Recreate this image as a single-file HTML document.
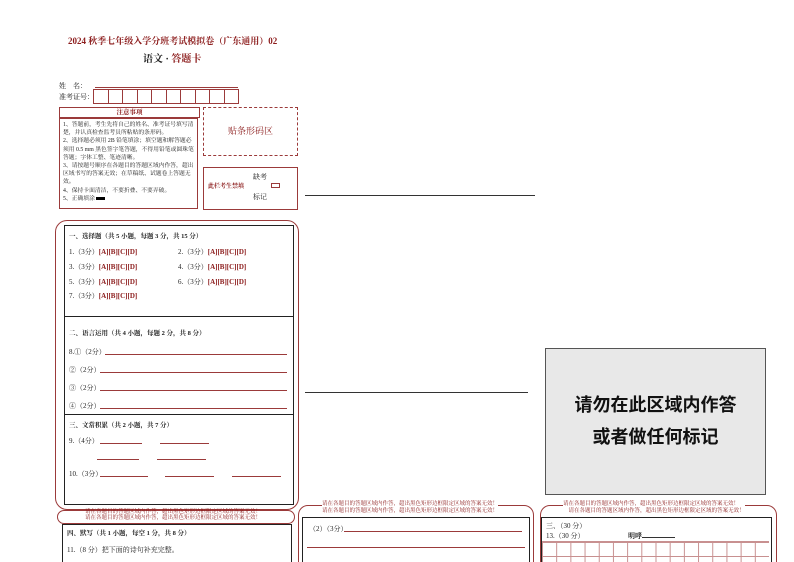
<!DOCTYPE html>
<html style="overflow:hidden;height:562px"><head><meta charset="utf-8"><style>
html,body{overflow:hidden}
body{margin:0;width:794px;height:562px;background:#fff;position:relative;overflow:hidden;font-family:"Liberation Serif","Noto Serif CJK SC","Noto Sans CJK SC",serif;color:#222}
.a{position:absolute}
.r{color:#8b1a1a}
.t{font-size:7px;white-space:nowrap}
.bx{border:1px solid #222}
.rb{border:1px solid #9b3a3a}
.ln{border-bottom:1px solid #9b3a3a}
</style></head><body>
<div class="a r" style="left:68px;top:34px;font-size:9px;font-weight:bold">2024 秋季七年级入学分班考试模拟卷（广东通用）02</div>
<div class="a" style="left:143px;top:50px;font-size:10px;font-weight:bold">语文 · <span class="r">答题卡</span></div>
<div class="a t" style="left:59px;top:81px">姓&nbsp;&nbsp;&nbsp;&nbsp;名：</div>
<div class="a ln" style="left:95px;top:87px;width:143px"></div>
<div class="a t" style="left:59px;top:92px">准考证号：</div>
<div class="a" style="left:93px;top:89px;display:flex">
<div class="rb" style="width:13.5px;height:13px"></div><div class="rb" style="width:13.5px;height:13px;border-left:0"></div><div class="rb" style="width:13.5px;height:13px;border-left:0"></div><div class="rb" style="width:13.5px;height:13px;border-left:0"></div><div class="rb" style="width:13.5px;height:13px;border-left:0"></div><div class="rb" style="width:13.5px;height:13px;border-left:0"></div><div class="rb" style="width:13.5px;height:13px;border-left:0"></div><div class="rb" style="width:13.5px;height:13px;border-left:0"></div><div class="rb" style="width:13.5px;height:13px;border-left:0"></div><div class="rb" style="width:13.5px;height:13px;border-left:0"></div></div>
<div class="a rb r t" style="left:59px;top:107px;width:139px;height:9px;text-align:center;line-height:9px;font-size:6.5px;font-weight:bold">注意事项</div>
<div class="a rb" style="left:59px;top:118px;width:139px;height:91px;font-size:5.8px;line-height:8.2px;padding:2px 3px;box-sizing:border-box;overflow:hidden">1、答题前，考生先将自己的姓名、准考证号填写清楚，并认真检查监考员所粘贴的条形码。<br>2、选择题必须用 2B 铅笔填涂；填空题和解答题必须用 0.5 mm 黑色签字笔答题，不得用铅笔或圆珠笔答题；字体工整、笔迹清晰。<br>3、请按题号顺序在各题目的答题区域内作答，超出区域书写的答案无效；在草稿纸、试题卷上答题无效。<br>4、保持卡面清洁，不要折叠、不要弄破。<br>5、正确填涂 <span style="display:inline-block;width:9px;height:3px;background:#000;vertical-align:middle"></span></div>
<div class="a r" style="left:203px;top:107px;width:93px;height:47px;border:1px dashed #9b3a3a;text-align:center;line-height:47px;font-size:9px">贴条形码区</div>
<div class="a rb" style="left:203px;top:167px;width:93px;height:41px"></div>
<div class="a t" style="left:253px;top:172px">缺考</div>
<div class="a r t" style="left:208px;top:181px;font-size:6px;font-weight:bold">此栏考生禁填</div>
<div class="a rb" style="left:271px;top:183px;width:7px;height:3px"></div>
<div class="a t" style="left:253px;top:192px">标记</div>
<div class="a" style="left:305px;top:195px;width:230px;border-bottom:1px solid #333"></div>
<div class="a rb" style="left:55px;top:220px;width:242px;height:288px;border-radius:12px"></div>
<div class="a bx" style="left:64px;top:225px;width:228px;height:278px;background:#fff"></div>
<div class="a" style="left:64px;top:316px;width:229px;border-top:1px solid #222"></div>
<div class="a" style="left:64px;top:414px;width:229px;border-top:1px solid #222"></div>
<div class="a t" style="left:69px;top:231px;font-weight:bold;font-size:6.5px">一、选择题（共 5 小题，每题 3 分，共 15 分）</div>
<div class="a t" style="left:69px;top:247px">1.（3分）<b class="r">[A][B][C][D]</b></div>
<div class="a t" style="left:178px;top:247px">2.（3分）<b class="r">[A][B][C][D]</b></div>
<div class="a t" style="left:69px;top:262px">3.（3分）<b class="r">[A][B][C][D]</b></div>
<div class="a t" style="left:178px;top:262px">4.（3分）<b class="r">[A][B][C][D]</b></div>
<div class="a t" style="left:69px;top:277px">5.（3分）<b class="r">[A][B][C][D]</b></div>
<div class="a t" style="left:178px;top:277px">6.（3分）<b class="r">[A][B][C][D]</b></div>
<div class="a t" style="left:69px;top:291px">7.（3分）<b class="r">[A][B][C][D]</b></div>
<div class="a t" style="left:69px;top:328px;font-weight:bold;font-size:6.5px">二、语言运用（共 4 小题，每题 2 分，共 8 分）</div>
<div class="a t" style="left:69px;top:347px">8.①（2分）</div><div class="a ln" style="left:105px;top:354px;width:182px"></div>
<div class="a t" style="left:69px;top:365px">②（2分）</div><div class="a ln" style="left:100px;top:372px;width:187px"></div>
<div class="a t" style="left:69px;top:383px">③（2分）</div><div class="a ln" style="left:100px;top:390px;width:187px"></div>
<div class="a t" style="left:69px;top:401px">④（2分）</div><div class="a ln" style="left:100px;top:408px;width:187px"></div>
<div class="a t" style="left:69px;top:420px;font-weight:bold;font-size:6.5px">三、文常积累（共 2 小题，共 7 分）</div>
<div class="a t" style="left:69px;top:436px">9.（4分）</div>
<div class="a ln" style="left:100px;top:443px;width:42px"></div><div class="a ln" style="left:160px;top:443px;width:49px"></div>
<div class="a ln" style="left:97px;top:459px;width:42px"></div><div class="a ln" style="left:157px;top:459px;width:49px"></div>
<div class="a t" style="left:69px;top:469px">10.（3分）</div>
<div class="a ln" style="left:100px;top:476px;width:48px"></div><div class="a ln" style="left:165px;top:476px;width:49px"></div><div class="a ln" style="left:232px;top:476px;width:49px"></div>
<div class="a rb" style="left:57px;top:510px;width:236px;height:12px;border-radius:7px;background:#fff"></div>
<div class="a r" style="left:85px;top:510px;font-size:5.5px;line-height:5.5px;white-space:nowrap">请在各题目的答题区域内作答，超出黑色矩形边框限定区域的答案无效！<br>请在各题目的答题区域内作答，超出黑色矩形边框限定区域的答案无效！</div>
<div class="a bx" style="left:62px;top:524px;width:228px;height:50px;background:#fff"></div>
<div class="a t" style="left:67px;top:528px;font-weight:bold;font-size:6.5px">四、默写（共 1 小题，每空 1 分，共 8 分）</div>
<div class="a t" style="left:67px;top:545px">11.（8 分）把下面的诗句补充完整。</div>
<div class="a" style="left:305px;top:392px;width:223px;border-bottom:1px solid #333"></div>
<div class="a rb" style="left:298px;top:505px;width:234px;height:70px;border-radius:10px"></div>
<div class="a r" style="left:322px;top:501px;font-size:5.5px;line-height:7px;white-space:nowrap;background:#fff">请在各题目的答题区域内作答，超出黑色矩形边框限定区域的答案无效！<br>请在各题目的答题区域内作答，超出黑色矩形边框限定区域的答案无效！</div>
<div class="a bx" style="left:302px;top:517px;width:226px;height:60px"></div>
<div class="a t" style="left:309px;top:524px">（2）（3分）</div><div class="a ln" style="left:344px;top:531px;width:178px"></div>
<div class="a ln" style="left:307px;top:547px;width:218px"></div>
<div class="a" style="left:545px;top:348px;width:219px;height:145px;background:#e8e8e8;border:1px solid #555"></div>
<div class="a" style="left:545px;top:391px;width:221px;text-align:center;font-size:18px;font-weight:bold;font-family:'Noto Sans CJK SC',sans-serif;color:#111">请勿在此区域内作答</div>
<div class="a" style="left:545px;top:423px;width:221px;text-align:center;font-size:18px;font-weight:bold;font-family:'Noto Sans CJK SC',sans-serif;color:#111">或者做任何标记</div>
<div class="a rb" style="left:540px;top:505px;width:235px;height:70px;border-radius:10px"></div>
<div class="a r" style="left:563px;top:501px;font-size:5.5px;line-height:7px;white-space:nowrap;background:#fff">请在各题目的答题区域内作答，超出黑色矩形边框限定区域的答案无效！<br>&nbsp;&nbsp;&nbsp;&nbsp;请在各题目的答题区域内作答，超出黑色矩形边框限定区域的答案无效！</div>
<div class="a bx" style="left:541px;top:517px;width:229px;height:60px"></div>
<div class="a t" style="left:546px;top:521px">三、（30 分）</div>
<div class="a t" style="left:546px;top:531px">13.（30 分）</div>
<div class="a t" style="left:628px;top:531px;font-weight:bold">明哮<span style="display:inline-block;width:33px;border-bottom:1px solid #333"></span></div>
<div class="a" style="left:542px;top:541px;width:227px;height:30px;background-image:linear-gradient(90deg,#c89090 1px,transparent 1px),linear-gradient(#c89090 1px,transparent 1px);background-size:14.2px 100%,100% 14px;border-top:1px solid #c89090"></div>
</body></html>
